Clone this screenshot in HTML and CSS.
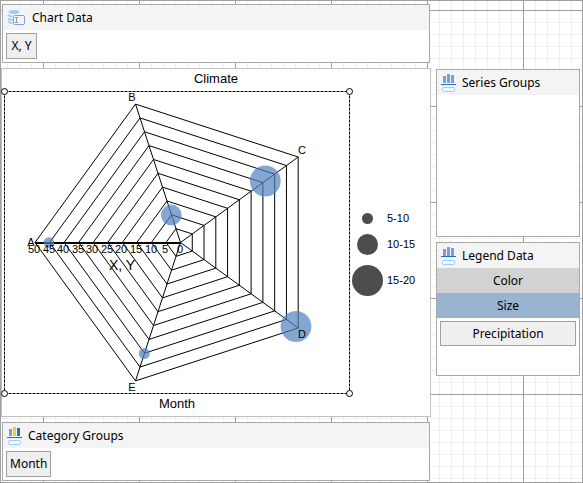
FILE: index.html
```
<!DOCTYPE html>
<html lang="en">
<head>
    <meta charset="UTF-8">
    <meta name="viewport" content="width=device-width, initial-scale=1.0">
    <title>Chart Designer</title>
    <link rel="stylesheet" href="styles.css">
</head>
<body>
    <main class="designer">
        <section class="panel">
            <h2 class="panel-header">
                <svg class="panel-icon wide" width="18" height="16" viewBox="0 0 18 16">
                    <ellipse cx="7" cy="2" rx="5.500" ry="2" fill="#99ccff"/>
                    <path d="M1 5q2 1.500 4.500 1.500M1 8.500q2 1.500 4.500 1.500M1 11.500q2 1.500 4.500 1.500" fill="none" stroke="#99ccff" stroke-width="2"/>
                    <rect x="6.500" y="5.500" width="11" height="9" rx="1" fill="#f4f4f4" stroke="#7c9fdb"/>
                    <path d="M8 7.500h3M8 12.500h3M9.500 7.500v5" fill="none" stroke="#999"/>
                </svg>
                Chart Data
            </h2>
            <div class="panel-body">
                <button class="field">X, Y</button>
            </div>
        </section>

        <section class="chart">
            <h1 class="chart-title">Climate</h1>
            <div class="chart-area">
                <div class="plot">
                    <svg class="radar" viewBox="2 88 350 309">
                        <defs>
                            <path id="ring" d="M-145.500 0L-45-138.400L117.700-85.500V85.500L-45 138.400Z" vector-effect="non-scaling-stroke"/>
                        </defs>
                        <!-- grid rings and spokes -->
                        <g class="grid" transform="translate(180.500 242.500)">
                            <use href="#ring"/>
                            <use href="#ring" transform="scale(.9)"/>
                            <use href="#ring" transform="scale(.8)"/>
                            <use href="#ring" transform="scale(.7)"/>
                            <use href="#ring" transform="scale(.6)"/>
                            <use href="#ring" transform="scale(.5)"/>
                            <use href="#ring" transform="scale(.4)"/>
                            <use href="#ring" transform="scale(.3)"/>
                            <use href="#ring" transform="scale(.2)"/>
                            <use href="#ring" transform="scale(.1)"/>
                            <path d="M0 0L-45-138.400M0 0L117.700-85.500M0 0L117.700 85.500M0 0L-45 138.400"/>
                        </g>
                        <path class="axis" d="M35 243H181"/>
                        <!-- bubbles -->
                        <g class="bubbles">
                            <circle cx="49" cy="242.500" r="5.300"/>
                            <circle cx="171.300" cy="215" r="10.400"/>
                            <circle cx="265.300" cy="181" r="15.400"/>
                            <circle cx="296" cy="326.500" r="15.400"/>
                            <circle cx="144.300" cy="353.500" r="5.500"/>
                        </g>
                        <g class="labels">
                            <text x="31" y="246">A</text>
                            <text x="132" y="101">B</text>
                            <text x="302" y="154">C</text>
                            <text x="302" y="338">D</text>
                            <text x="132" y="391">E</text>
                            <text x="34" y="253">50</text>
                            <text x="49" y="253">45</text>
                            <text x="63" y="253">40</text>
                            <text x="78" y="253">35</text>
                            <text x="92" y="253">30</text>
                            <text x="107" y="253">25</text>
                            <text x="121" y="253">20</text>
                            <text x="136" y="253">15</text>
                            <text x="151" y="253">10</text>
                            <text x="165" y="253">5</text>
                            <text x="180" y="253">0</text>
                            <text class="axis-title" x="122" y="270">X, Y</text>
                        </g>
                        <!-- selection frame -->
                        <path class="frame" d="M4.500 91.500H349.500M4.500 393.500H349.500M4.500 91.500V393.500M349.500 91.500V393.500"/>
                        <g class="handles">
                            <circle cx="4.500" cy="91.500" r="3"/>
                            <circle cx="349.500" cy="91.500" r="3"/>
                            <circle cx="4.500" cy="393.500" r="3"/>
                            <circle cx="349.500" cy="393.500" r="3"/>
                        </g>
                    </svg>
                    <div class="category-title">Month</div>
                </div>
                <ul class="size-legend">
                    <li><span class="dot small"></span>5-10</li>
                    <li><span class="dot medium"></span>10-15</li>
                    <li><span class="dot large"></span>15-20</li>
                </ul>
            </div>
        </section>

        <aside class="side">
            <section class="panel series">
                <h2 class="panel-header">
                    <svg class="panel-icon" width="15" height="18" viewBox="0 0 15 18">
                        <path d="M2 2h3v7H2zM6 0h3v9H6zM10 1h3v8h-3z" fill="#7f9bd1"/>
                        <path d="M0 10h15v1H0z" fill="#1874d2"/>
                        <rect x="1.500" y="13.500" width="12" height="4" rx="1" fill="#f4f8ff" stroke="#99ccff"/>
                    </svg>
                    Series Groups
                </h2>
            </section>
            <section class="panel legend-data">
                <h2 class="panel-header">
                    <svg class="panel-icon" width="15" height="18" viewBox="0 0 15 18">
                        <path d="M2 2h3v7H2zM6 0h3v9H6zM10 1h3v8h-3z" fill="#7f9bd1"/>
                        <path d="M0 9h15v1H0z" fill="#1874d2"/>
                        <rect x="1.500" y="13.500" width="12" height="4" rx="1" fill="#f4f8ff" stroke="#99ccff"/>
                    </svg>
                    Legend Data
                </h2>
                <button class="tab">Color</button>
                <button class="tab active">Size</button>
                <div class="panel-body">
                    <button class="field wide">Precipitation</button>
                </div>
            </section>
        </aside>

        <section class="panel">
            <h2 class="panel-header">
                <svg class="panel-icon" width="15" height="18" viewBox="0 0 15 18">
                    <path d="M2 2h3v7H2z" fill="#7f9bd1"/>
                    <path d="M6 0h3v9H6z" fill="#fdc82f"/>
                    <path d="M10 1h3v8h-3z" fill="#1874d2"/>
                    <path d="M0 10h15v1H0z" fill="#1874d2"/>
                    <rect x="1.500" y="13.500" width="12" height="4" rx="1" fill="#f4f8ff" stroke="#99ccff"/>
                </svg>
                Category Groups
            </h2>
            <div class="panel-body">
                <button class="field">Month</button>
            </div>
        </section>
    </main>
</body>
</html>
```
FILE: styles.css
```
* {
    box-sizing: border-box;
}
body {
    margin: 0;
    font: 12px "Noto Sans", sans-serif;
    color: #000;
}
h1, h2, ul {
    margin: 0;
    padding: 0;
    font-weight: normal;
    list-style: none;
}
.designer {
    display: grid;
    grid-template-columns: 1fr 144px;
    column-gap: 5px;
    row-gap: 5px;
    align-content: start;
    min-height: 100vh;
    padding: 3px 2px 1px 0;
    border: 1px solid #a0a0a0;
    background-color: #fff;
    /* major lines every 96px, minor lines every 12px */
    background-image:
        linear-gradient(90deg, #a0a0a0 1px, transparent 1px),
        linear-gradient(#a0a0a0 1px, transparent 1px),
        linear-gradient(90deg, #efefef 1px, transparent 1px),
        linear-gradient(#efefef 1px, transparent 1px);
    background-size: 96px 96px, 96px 96px, 12px 12px, 12px 12px;
    background-position: 42px 9px, 42px 9px, 6px 9px, 6px 9px;
}
.panel {
    grid-column: 1;
    min-height: 59px;
    margin: 0 1px;
    border: 1px solid #a8a8a8;
    background: #fff;
}
.panel-header {
    display: flex;
    align-items: center;
    gap: 6px;
    height: 25px;
    padding-left: 4px;
    background: #f4f4f4;
    font-size: 12px;
}
.panel-icon.wide {
    margin-right: 1px;
}
.panel-body {
    padding: 3px;
}
.field {
    display: block;
    min-width: 31px;
    height: 26px;
    padding: 0 3px 1px;
    border: 1px solid #a0a0a0;
    background: #efefef;
    color: #000;
    font: inherit;
}
.field.wide {
    width: 100%;
    height: 25px;
}
.side {
    display: flex;
    flex-direction: column;
    gap: 5px;
    grid-column: 2;
    grid-row: 2;
    padding-top: 1px;
}
.side .panel {
    margin: 0;
}
.series {
    height: 168px;
}
.legend-data {
    height: 134px;
}
.tab {
    display: block;
    width: 100%;
    height: 25px;
    padding: 0 0 1px;
    border: none;
    background: #d2d2d2;
    color: #000;
    font: inherit;
}
.tab.active {
    background: #99b4d1;
}
.chart {
    grid-column: 1;
    grid-row: 2;
    border: 1px solid #c0c0c0;
    background: #fff;
    font-family: "Liberation Sans", Arial, sans-serif;
}
.chart-title {
    font-size: 13px;
    line-height: 19px;
    text-align: center;
}
.chart-area {
    display: flex;
}
.plot {
    flex: 1;
}
.radar {
    display: block;
    width: 100%;
    overflow: visible;
}
.grid {
    fill: none;
    stroke: #000;
}
.axis {
    stroke: #000;
    stroke-width: 2;
}
.bubbles {
    fill: #4f81bd;
    fill-opacity: 0.7;
}
.labels {
    font-size: 11px;
    text-anchor: middle;
}
.axis-title {
    font-size: 14px;
}
.frame {
    stroke: #000;
    stroke-dasharray: 3 1;
}
.handles {
    fill: #fff;
    stroke: #000;
}
.category-title {
    padding-bottom: 5px;
    font-size: 13px;
    line-height: 14px;
    text-align: center;
}
.size-legend {
    display: flex;
    flex-direction: column;
    gap: 10px;
    width: 78px;
    padding-top: 125px;
    font-size: 11px;
}
.size-legend li {
    display: grid;
    grid-template-columns: 31px 1fr;
    align-items: center;
    column-gap: 4px;
    line-height: 11px;
}
.dot {
    justify-self: center;
    border-radius: 50%;
    background: #4d4d4d;
}
.small {
    width: 11px;
    height: 11px;
}
.medium {
    width: 21px;
    height: 21px;
}
.large {
    width: 31px;
    height: 31px;
}
```
